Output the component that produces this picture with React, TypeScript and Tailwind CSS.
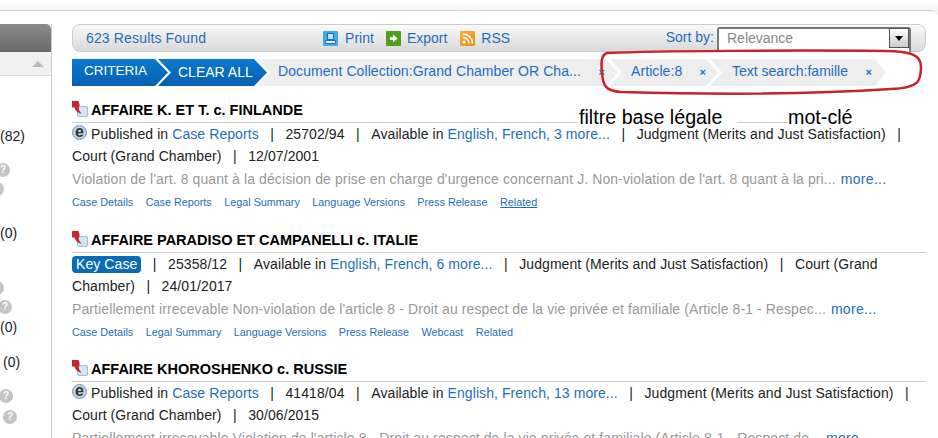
import React from "react";

const L = ({ children, className = "" }: { children: React.ReactNode; className?: string }) => (
  <a className={"text-[#1f6dbb] " + className}>{children}</a>
);

const DocIcon = () => (
  <svg width="17" height="17" viewBox="0 0 17 17" className="shrink-0 -translate-y-[1px]">
    <rect x="5.5" y="5.500" width="10" height="10" rx="1.500" fill="#d3e6f6" stroke="#9dbdd8" />
    <path d="M0 0h6.500l1 3v2.500c-1 1-1 3 0 4.500l2 2.500C6.500 12.500 3.500 10 2.500 6.500H0z" fill="#c9252d" />
  </svg>
);

const EIcon = () => (
  <span className="inline-block align-top mt-[2px] w-[15px] h-[15px] mr-[4px] rounded-full bg-[#bfd5e9] border border-[#6d93b3] text-center text-[16px] leading-[11px] font-bold text-[#333]">
    e
  </span>
);

const Sep = () => <span className="mx-[11.5px]">|</span>;

const Q = ({ className = "" }: { className?: string }) => (
  <div className={"w-[14px] h-[14px] rounded-full bg-[#c4c4c4] text-white text-[10px] leading-[14px] font-bold text-center " + className}>?</div>
);

const Links = ({ items }: { items: string[] }) => (
  <div className="flex gap-[12.5px] text-[10.8px] leading-[14px] text-[#1f6dbb] mt-[5px] h-[14px]">
    {items.map((i) => (
      <a key={i} className={i === "Related*" ? "underline" : ""}>{i.replace("*", "")}</a>
    ))}
  </div>
);

const Result = ({ title, children, links, excerpt, more }: { title: string; children: React.ReactNode; links: string[]; excerpt: string; more: string }) => (
  <div className="h-[129.5px]">
    <div className="flex items-end gap-[2px] h-[23px] border-b border-[#ccc] pb-[3px]">
      <DocIcon />
      <h2 className="text-[14.5px] leading-[18px] font-bold text-black whitespace-nowrap">{title}</h2>
    </div>
    <div className="text-[14px] leading-[22px] text-[#222] tracking-[0.08px]">{children}</div>
    <div className="text-[14px] leading-[22px] text-[#999] tracking-[0.1px] whitespace-nowrap mt-[1px]">
      {excerpt} <L className="ml-[1px] tracking-[0.3px]">{more}</L>
    </div>
    <Links items={links} />
  </div>
);

const Chevron = () => (
  <span className="w-[16px] h-full shrink-0 bg-white [clip-path:polygon(0_0,4px_0,100%_50%,4px_100%,0_100%,calc(100%-4px)_50%)]" />
);

const X = ({ className = "" }: { className?: string }) => (
  <span className={"text-[#1f6dbb] text-[11px] font-bold leading-[27px] " + className}>×</span>
);

export default function App() {
  return (
    <div className="relative w-[938px] h-[438px] overflow-hidden bg-[#f8f8f8] font-['Liberation_Sans',Arial,sans-serif]">
      <div className="h-[10px] bg-gradient-to-b from-white to-[#f6f6f6]" />
      <div className="flex h-[428px] bg-white border-t border-[#d5d5d5] rounded-tr-[6px]">
        <aside className="w-[52px] h-[415px] shrink-0 border-r border-[#ccc] text-[14px] text-[#222] mt-[13px]">
          <div className="h-[28px] rounded-tr-[5px] bg-gradient-to-b from-[#8c8c8c] to-[#6a6a6a]" />
          <div className="h-[24px] bg-[#f1f1f1] border-b border-[#ddd] flex justify-end items-center pr-[7px]">
            <div className="w-0 h-0 border-x-[6px] border-x-transparent border-b-[6px] border-b-[#bbb]" />
          </div>
          <div className="leading-[18px] mt-[51px]">(82)</div>
          <Q className="mt-[18px] -ml-[4px]" />
          <Q className="mt-[5px] -ml-[10px]" />
          <div className="leading-[18px] mt-[28px]">(0)</div>
          <Q className="mt-[39px] -ml-[10px]" />
          <Q className="mt-[5px] -ml-[2px]" />
          <div className="leading-[18px] mt-[4px]">(0)</div>
          <div className="leading-[18px] mt-[17px] ml-[3px]">(0)</div>
          <Q className="mt-[18px] -ml-[1px]" />
          <Q className="mt-[7px] ml-[3px]" />
        </aside>
        <main className="ml-[20px] w-[854px] shrink-0 pt-[13px]">
          <div className="h-[28px] rounded-[8px] border border-[#ccc] bg-gradient-to-b from-[#fafafa] to-[#d9d9d9] flex items-center text-[14px] text-[#1f6dbb] whitespace-nowrap">
            <span className="ml-[13px] tracking-[0.15px]">623 Results Found</span>
            <div className="flex items-center ml-[117px]">
              <span className="w-[15px] h-[15px] rounded-[1px] bg-[#3fa9ea] mr-[7px] flex items-center justify-center">
                <svg width="13" height="13" viewBox="0 0 13 13" fill="none"><rect x="3.500" y="1.500" width="6" height="6" fill="#bfe3fa" stroke="#1c6fb8" /><path d="M1.500 8.500h10v3h-10z" fill="#e6f5ff" stroke="#1c6fb8" /></svg>
              </span>
              <span>Print</span>
              <span className="w-[15px] h-[15px] rounded-[1px] bg-[#4f9e1e] ml-[12px] mr-[6px] flex items-center justify-center">
                <svg width="11" height="11" viewBox="0 0 11 11"><path d="M2 4h3V1.500L9.500 5.500 5 9.500V7H2z" fill="#fff" /></svg>
              </span>
              <span>Export</span>
              <span className="w-[15px] h-[15px] rounded-[1px] bg-gradient-to-br from-[#fbb03b] to-[#ee8a12] ml-[13px] mr-[6px] flex items-center justify-center">
                <svg width="13" height="13" viewBox="0 0 13 13"><circle cx="3" cy="10" r="1.600" fill="#fff" /><path d="M2 5.500a6 6 0 0 1 6 6M2 2a9.500 9.500 0 0 1 9.500 9.500" fill="none" stroke="#fff" strokeWidth="1.600" /></svg>
              </span>
              <span>RSS</span>
            </div>
            <span className="ml-auto mr-[3px] leading-[14px] mb-[2px]">Sort by:</span>
            <div className="w-[194px] h-[25px] mr-[14px] mt-[2px] self-start bg-white border-2 border-[#777] border-b-0 rounded-t-[3px] flex items-start text-[#888] pl-[8px]">
              <span className="leading-[18px]">Relevance</span>
              <span className="ml-auto w-[20px] h-[20px] -mt-[1px] border border-[#555] bg-gradient-to-b from-white to-[#ccc] flex items-center justify-center">
                <span className="w-0 h-0 border-x-[4px] border-x-transparent border-t-[5px] border-t-black" />
              </span>
            </div>
          </div>
          <div className="mt-[7px] h-[27px] flex text-[14px] tracking-[0.08px] bg-[#eeeeee] w-[814px] whitespace-nowrap [clip-path:polygon(0_0,calc(100%-11px)_0,100%_50%,calc(100%-11px)_100%,0_100%)]">
            <div className="w-[198px] h-full shrink-0 flex bg-white text-white [clip-path:polygon(0_0,186px_0,100%_50%,186px_100%,0_100%)]">
              <span className="h-full w-[96px] shrink-0 pl-[12px] text-[13.5px] tracking-normal leading-[24px] bg-gradient-to-b from-[#0a7ad0] to-[#0560b0] [clip-path:polygon(0_0,83px_0,100%_50%,83px_100%,0_100%)]">CRITERIA</span>
              <span className="h-full w-[109px] shrink-0 -ml-[10px] pl-[20px] tracking-normal leading-[27px] bg-gradient-to-b from-[#0a7ad0] to-[#0560b0] [clip-path:polygon(0_0,96px_0,100%_50%,96px_100%,0_100%,13px_50%)]">CLEAR ALL</span>
            </div>
            <div className="w-[336px] shrink-0 flex pl-[8px] pr-[1px]">
              <L className="leading-[24px]">Document Collection:Grand Chamber OR Cha...</L>
              <X className="ml-auto" />
            </div>
            <Chevron />
            <div className="w-[84px] shrink-0 flex pl-[9px]">
              <L className="leading-[24px]">Article:8</L>
              <X className="ml-auto" />
            </div>
            <Chevron />
            <div className="flex-1 flex pl-[10px] pr-[14px]">
              <L className="leading-[24px] tracking-normal">Text search:famille</L>
              <X className="ml-auto" />
            </div>
          </div>
          <div className="mt-[14px]">
            <Result
              title="AFFAIRE K. ET T. c. FINLANDE"
              excerpt="Violation de l'art. 8 quant à la décision de prise en charge d'urgence concernant J. Non-violation de l'art. 8 quant à la pri..."
              more="more..."
              links={["Case Details", "Case Reports", "Legal Summary", "Language Versions", "Press Release", "Related*"]}
            >
              <EIcon />Published in <L>Case Reports</L><Sep />25702/94<Sep />Available in <L>English, French, 3 more...</L><Sep />Judgment (Merits and Just Satisfaction)<Sep /><br />Court (Grand Chamber)<Sep />12/07/2001
            </Result>
            <Result
              title="AFFAIRE PARADISO ET CAMPANELLI c. ITALIE"
              excerpt="Partiellement irrecevable Non-violation de l'article 8 - Droit au respect de la vie privée et familiale (Article 8-1 - Respec..."
              more="more..."
              links={["Case Details", "Legal Summary", "Language Versions", "Press Release", "Webcast", "Related"]}
            >
              <span className="inline-block bg-[#0a6cb5] text-white rounded-[4px] px-[4px] leading-[17px]">Key Case</span><Sep />25358/12<Sep />Available in <L>English, French, 6 more...</L><Sep />Judgment (Merits and Just Satisfaction)<Sep />Court (Grand Chamber)<Sep />24/01/2017
            </Result>
            <Result
              title="AFFAIRE KHOROSHENKO c. RUSSIE"
              excerpt="Partiellement irrecevable Violation de l'article 8 - Droit au respect de la vie privée et familiale (Article 8-1 - Respect de..."
              more="more..."
              links={[]}
            >
              <EIcon />Published in <L>Case Reports</L><Sep />41418/04<Sep />Available in <L>English, French, 13 more...</L><Sep />Judgment (Merits and Just Satisfaction)<Sep /><br />Court (Grand Chamber)<Sep />30/06/2015
            </Result>
          </div>
        </main>
      </div>
      <svg className="absolute left-[595px] top-[45px]" width="335" height="60" viewBox="0 0 335 60" fill="none">
        <path d="M12 8C60 6 200 5 290 6c25 .5 36 3 36 16 0 14-2 21-30 22-90 6-200 5-270 3C10 46 8 40 7 28 6 18 6 10 12 8z" stroke="#c8222c" strokeWidth="2.500" />
      </svg>
      <div className="absolute left-[578px] top-[106px] w-[159px] bg-white text-[19.7px] leading-[22px] text-black pl-[1px]">filtre base légale</div>
      <div className="absolute left-[788px] top-[106px] bg-white text-[19.7px] leading-[22px] text-black w-[150px]">mot-clé</div>
    </div>
  );
}
